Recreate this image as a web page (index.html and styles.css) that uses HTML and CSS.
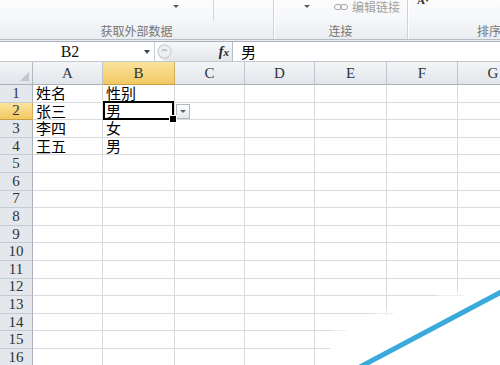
FILE: index.html
```html
<!DOCTYPE html>
<html lang="zh-CN">
<head>
<meta charset="utf-8">
<title>Excel 数据有效性</title>
<link rel="stylesheet" href="styles.css">
</head>
<body>
<div class="app">
  <div class="ribbon">
    <div class="group g-ext">
      <div class="group-top">
        <div class="part-a"><span class="caret caret-ext"></span></div>
      </div>
      <div class="group-label">获取外部数据</div>
    </div>
    <div class="group g-conn">
      <div class="group-top">
        <span class="caret caret-conn"></span>
        <span class="link-btn">
          <svg class="link-icon" width="14" height="8" viewBox="0 0 14 8"><rect x="0.5" y="1.5" width="7" height="5" rx="2.5" fill="none" stroke="#a9a9a9"/><rect x="6.5" y="1.5" width="7" height="5" rx="2.5" fill="none" stroke="#a9a9a9"/></svg>
          <span class="link-text">编辑链接</span>
        </span>
      </div>
      <div class="group-label">连接</div>
    </div>
    <div class="group g-sort">
      <div class="group-top"><span class="sort-icon">A<span class="sort-arrow">▾</span></span></div>
      <div class="group-label label-left">排序和筛选</div>
    </div>
  </div>

  <div class="fbar-wrap">
    <div class="fbar">
      <div class="namebox"><span class="name">B2</span><span class="caret caret-name"></span></div>
      <div class="fx-zone">
        <svg class="grip" width="15" height="17" viewBox="0 0 15 17"><circle cx="7.5" cy="8.5" r="6.5" fill="#eef0f2" stroke="#c2c6cc"/><path d="M5 8 Q7.5 5.5 10 8" fill="none" stroke="#b4b9c0" stroke-width="1.2"/></svg>
        <span class="fx">f<span class="fx-x">x</span></span>
      </div>
      <div class="formula">男</div>
    </div>
  </div>

  <div class="sheet">
    <div class="row"><div class="corner"><span class="corner-tri"></span></div><div class="ch">A</div><div class="ch hl">B</div><div class="ch">C</div><div class="ch">D</div><div class="ch">E</div><div class="ch">F</div><div class="ch">G</div></div>
    <div class="row"><div class="rh">1</div><div class="c">姓名</div><div class="c">性别</div><div class="c"></div><div class="c"></div><div class="c"></div><div class="c"></div><div class="c"></div></div>
    <div class="row"><div class="rh hl">2</div><div class="c">张三</div><div class="c sel">男</div><div class="c dd-cell"><span class="dd"><span class="caret caret-dd"></span></span></div><div class="c"></div><div class="c"></div><div class="c"></div><div class="c"></div></div>
    <div class="row"><div class="rh">3</div><div class="c">李四</div><div class="c">女</div><div class="c"></div><div class="c"></div><div class="c"></div><div class="c"></div><div class="c"></div></div>
    <div class="row"><div class="rh">4</div><div class="c">王五</div><div class="c">男</div><div class="c"></div><div class="c"></div><div class="c"></div><div class="c"></div><div class="c"></div></div>
    <div class="row"><div class="rh">5</div><div class="c"></div><div class="c"></div><div class="c"></div><div class="c"></div><div class="c"></div><div class="c"></div><div class="c"></div></div>
    <div class="row"><div class="rh">6</div><div class="c"></div><div class="c"></div><div class="c"></div><div class="c"></div><div class="c"></div><div class="c"></div><div class="c"></div></div>
    <div class="row"><div class="rh">7</div><div class="c"></div><div class="c"></div><div class="c"></div><div class="c"></div><div class="c"></div><div class="c"></div><div class="c"></div></div>
    <div class="row"><div class="rh">8</div><div class="c"></div><div class="c"></div><div class="c"></div><div class="c"></div><div class="c"></div><div class="c"></div><div class="c"></div></div>
    <div class="row"><div class="rh">9</div><div class="c"></div><div class="c"></div><div class="c"></div><div class="c"></div><div class="c"></div><div class="c"></div><div class="c"></div></div>
    <div class="row"><div class="rh">10</div><div class="c"></div><div class="c"></div><div class="c"></div><div class="c"></div><div class="c"></div><div class="c"></div><div class="c"></div></div>
    <div class="row"><div class="rh">11</div><div class="c"></div><div class="c"></div><div class="c"></div><div class="c"></div><div class="c"></div><div class="c"></div><div class="c"></div></div>
    <div class="row"><div class="rh">12</div><div class="c"></div><div class="c"></div><div class="c"></div><div class="c"></div><div class="c"></div><div class="c"></div><div class="c"></div></div>
    <div class="row"><div class="rh">13</div><div class="c"></div><div class="c"></div><div class="c"></div><div class="c"></div><div class="c"></div><div class="c"></div><div class="c"></div></div>
    <div class="row"><div class="rh">14</div><div class="c"></div><div class="c"></div><div class="c"></div><div class="c"></div><div class="c"></div><div class="c"></div><div class="c"></div></div>
    <div class="row"><div class="rh">15</div><div class="c"></div><div class="c"></div><div class="c"></div><div class="c"></div><div class="c"></div><div class="c"></div><div class="c"></div></div>
    <div class="row"><div class="rh">16</div><div class="c"></div><div class="c"></div><div class="c"></div><div class="c"></div><div class="c"></div><div class="c"></div><div class="c"></div></div>
  </div>

  <svg class="watermark" width="170" height="90" viewBox="0 0 170 90">
    <polygon points="0,56 40,40 100,22 172,8 172,92 0,92" fill="#ffffff" fill-opacity="0.55"/>
    <polygon points="0,62 40,46 100,27 172,13 172,92 0,92" fill="#ffffff"/>
    <line x1="28" y1="93" x2="173" y2="16" stroke="#3aaadc" stroke-width="5"/>
  </svg>
</div>
</body>
</html>
```

FILE: styles.css
```css
* { box-sizing: border-box; }

body {
  margin: 0;
  width: 500px;
  height: 365px;
  overflow: hidden;
  background: #ffffff;
  font-family: "Liberation Sans", "Noto Sans CJK SC", sans-serif;
}

.app {
  position: relative;
  width: 500px;
  height: 365px;
  overflow: hidden;
  background: #ffffff;
}

/* ---------- ribbon ---------- */
.ribbon {
  display: flex;
  height: 40px;
  border-bottom: 1px solid #b7bdc5;
  background: linear-gradient(#fcfcfd, #f4f6f8 55%, #eaedf0);
}

.group {
  display: flex;
  flex-direction: column;
  flex: none;
  border-right: 1px solid #cdd2d8;
  box-shadow: 1px 0 0 #ffffff;
}

.g-ext { width: 274px; }
.g-conn { width: 134px; }
.g-sort { flex: 1; border-right: none; box-shadow: none; }

.group-top {
  display: flex;
  height: 22px;
}

.group-label {
  height: 17px;
  line-height: 17px;
  text-align: center;
  font-family: "Noto Sans CJK SC", sans-serif;
  font-size: 12px;
  color: #767676;
  white-space: nowrap;
  overflow: hidden;
}

.label-left {
  text-align: left;
  padding-left: 69px;
}

.part-a {
  width: 214px;
  height: 21px;
  border-right: 1px solid #d3d7dc;
}

.caret {
  display: block;
  width: 0;
  height: 0;
  border-left: 3px solid transparent;
  border-right: 3px solid transparent;
  border-top: 3px solid #555b61;
}

.caret-ext { margin: 5px 0 0 173px; }
.caret-conn { margin: 5px 0 0 30px; flex: none; }

.link-btn {
  display: flex;
  align-items: center;
  height: 13px;
  margin-left: 24px;
}

.link-icon { flex: none; }

.link-text {
  margin-left: 4px;
  font-family: "Noto Sans CJK SC", sans-serif;
  font-size: 12px;
  line-height: 13px;
  color: #a0a0a0;
}

.sort-icon {
  height: 4px;
  margin-left: 9px;
  overflow: hidden;
  display: flex;
  align-items: flex-end;
  font-family: "Liberation Serif", serif;
  font-weight: bold;
  font-size: 11px;
  line-height: 8px;
  color: #2a2a2a;
}

.sort-arrow {
  font-size: 8px;
  color: #3a3a3a;
}

/* ---------- formula bar ---------- */
.fbar-wrap {
  padding-top: 1px;
  background: #eceff2;
}

.fbar {
  display: flex;
  height: 21px;
  border-top: 1px solid #a9b0b9;
  border-bottom: 1px solid #c3c8cf;
  background: #ffffff;
}

.namebox {
  display: flex;
  align-items: center;
  width: 155px;
  flex: none;
  border-right: 1px solid #c9ced4;
}

.name {
  width: 140px;
  text-align: center;
  font-family: "Liberation Serif", serif;
  font-size: 16px;
  color: #111111;
}

.caret-name {
  margin-left: 4px;
  border-left-width: 3.5px;
  border-right-width: 3.5px;
  border-top-width: 4px;
  border-top-color: #3d4247;
}

.fx-zone {
  display: flex;
  align-items: center;
  width: 76px;
  flex: none;
  margin-left: 2px;
  border-radius: 10px 0 0 10px;
  border-right: 1px solid #b7bdc5;
  background: linear-gradient(#f7f8f9, #e3e6ea);
}

.grip { flex: none; }

.fx {
  margin-left: auto;
  margin-right: 3px;
  font-family: "Liberation Serif", serif;
  font-style: italic;
  font-weight: bold;
  font-size: 14px;
  color: #222222;
}

.fx-x { font-size: 11px; }

.formula {
  flex: 1;
  padding-left: 8px;
  font-family: "Noto Sans CJK SC", sans-serif;
  font-size: 15px;
  line-height: 19px;
  color: #000000;
}

/* ---------- sheet ---------- */
.sheet {
  display: grid;
  grid-template-columns: 33px 70px 72px 70px 70px 72px 71px 71px;
  grid-template-rows: 23px;
  grid-auto-rows: 17.6px;
}

.row { display: contents; }

.corner {
  display: flex;
  align-items: flex-end;
  justify-content: flex-end;
  padding: 0 3px 3px 0;
  background: linear-gradient(#f2f4f6, #e1e5ea);
  border-right: 1px solid #b1b8c1;
  border-bottom: 1px solid #a9b1bb;
}

.corner-tri {
  width: 0;
  height: 0;
  border-left: 9px solid transparent;
  border-bottom: 9px solid #c3c8ce;
}

.ch {
  display: flex;
  align-items: center;
  justify-content: center;
  background: linear-gradient(#f3f5f7, #e2e6ea);
  border-right: 1px solid #bfc5cd;
  border-bottom: 1px solid #a9b1bb;
  font-family: "Liberation Serif", serif;
  font-size: 15px;
  color: #2f3338;
}

.rh {
  display: flex;
  align-items: center;
  justify-content: center;
  background: #e4e8ed;
  border-right: 1px solid #a8b0ba;
  border-bottom: 1px solid #c6cbd2;
  font-family: "Liberation Serif", serif;
  font-size: 15px;
  line-height: 15px;
  color: #2f3338;
}

.ch.hl, .rh.hl {
  background: linear-gradient(#fae39c, #f3c862);
  border-right-color: #d2ad5c;
  border-bottom-color: #c99f48;
}

.c {
  padding-left: 3px;
  border-right: 1px solid #d8dadd;
  border-bottom: 1px solid #d8dadd;
  font-family: "Noto Sans CJK SC", sans-serif;
  font-size: 15px;
  line-height: 16px;
  color: #000000;
  white-space: nowrap;
}

.sel {
  position: relative;
}

.sel::after {
  content: "";
  position: absolute;
  left: 0;
  top: -2px;
  right: 0;
  bottom: -1px;
  border: 2px solid #000000;
}

.sel::before {
  content: "";
  position: absolute;
  right: -3px;
  bottom: -4px;
  width: 6px;
  height: 6px;
  background: #000000;
  border: 1px solid #ffffff;
  z-index: 2;
}

.dd-cell { padding: 0; }

.dd {
  display: flex;
  align-items: center;
  justify-content: center;
  width: 14px;
  height: 15px;
  margin: 1px 0 0 1px;
  border: 1px solid #b3b7bd;
  background: linear-gradient(#ffffff, #e4e7ea);
}

.caret-dd {
  border-left-width: 3px;
  border-right-width: 3px;
  border-top-width: 3px;
  border-top-color: #5a5f66;
}

/* ---------- watermark overlay ---------- */
.watermark {
  position: absolute;
  right: 0;
  bottom: 0;
}
```
